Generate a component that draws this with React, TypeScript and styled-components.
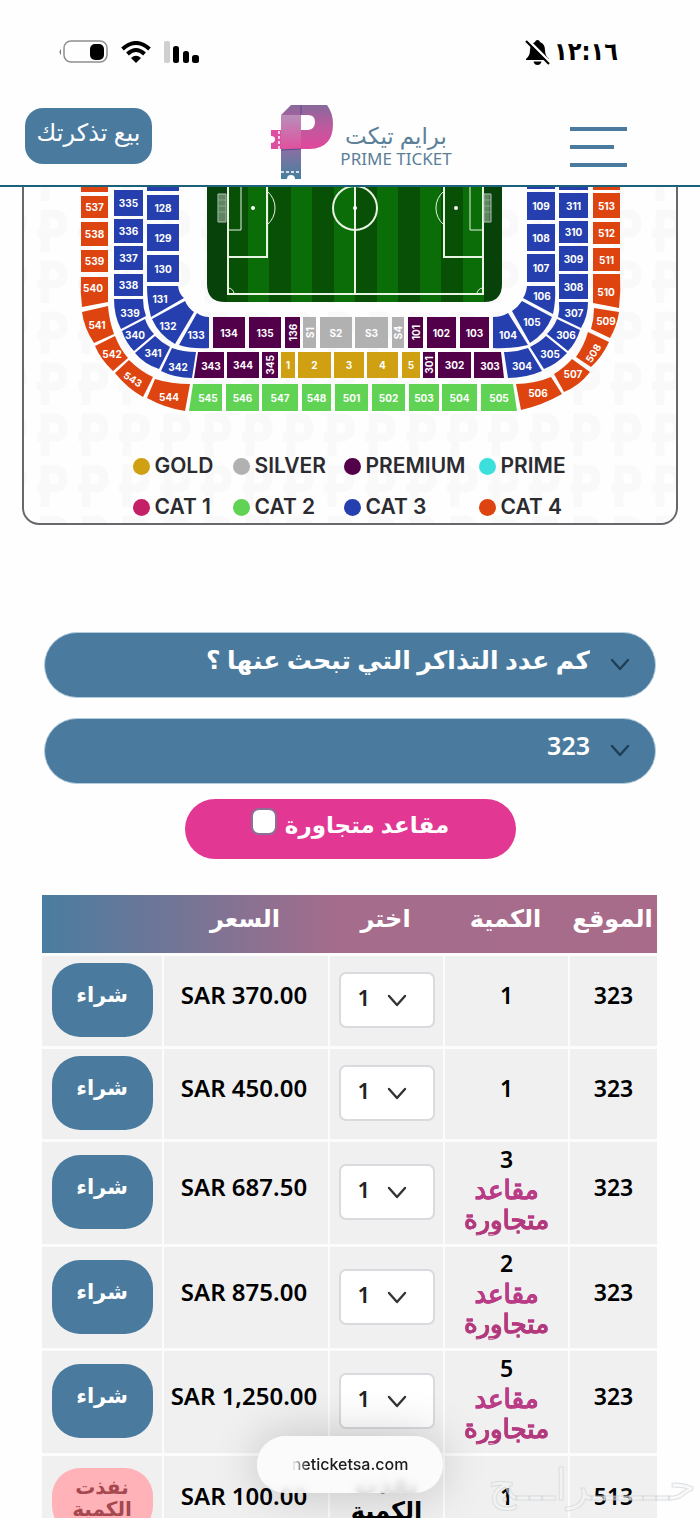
import React from "react";
import styled, { createGlobalStyle } from "styled-components";

const BLUE = "#4a7b9e";
const FONT = '"Noto Sans", "DejaVu Sans", sans-serif';

const GlobalStyle = createGlobalStyle`
  *, *::before, *::after { box-sizing: border-box; }
  body { margin: 0; background: #fefefe; font-family: ${FONT}; color: #000; }
  button, input, select { font: inherit; }
`;

const Screen = styled.div`
  position: relative;
  height: 100vh;
  overflow: hidden;
  display: flex;
  flex-direction: column;
`;

/* ---------- header ---------- */
const Header = styled.header`
  flex: none;
  border-bottom: 2px solid #1d6079;
  background: #fefefe;
`;
const StatusBar = styled.div`
  display: flex;
  align-items: center;
  justify-content: space-between;
  height: 104px;
  padding: 0 82px 0 58px;
`;
const Clock = styled.div`
  display: flex;
  align-items: center;
  gap: 4px;
  direction: ltr;
  font: 700 25px/32px "DejaVu Sans Condensed", "DejaVu Sans", sans-serif;
`;
const StatusIcons = styled.div`
  display: flex;
  align-items: center;
  gap: 13px;
  direction: ltr;
`;
const NavBar = styled.nav`
  display: flex;
  justify-content: space-between;
  height: 81px;
  padding: 0 73px 0 25px;
`;
const MenuButton = styled.button`
  align-self: flex-start;
  display: flex;
  flex-direction: column;
  align-items: flex-end;
  gap: 14px;
  width: 57px;
  margin-top: 23px;
  padding: 0;
  border: 0;
  background: none;
`;
const MenuLine = styled.span<{ $short?: boolean }>`
  width: ${(p) => (p.$short ? "44px" : "100%")};
  height: 4px;
  background: ${BLUE};
`;
const Logo = styled.a`
  display: flex;
  gap: 6px;
  color: #5b7f98;
  text-decoration: none;
`;
const LogoText = styled.span`
  display: flex;
  flex-direction: column;
  padding-top: 19px;
  text-align: center;
`;
const LogoArabic = styled.span`
  font-size: 23px;
  line-height: 25px;
`;
const LogoLatin = styled.span`
  font: 400 17px/22px "Noto Sans", sans-serif;
`;
const SellButton = styled.button`
  width: 127px;
  height: 56px;
  margin-top: 4px;
  padding: 0 0 10px;
  border: 0;
  border-radius: 18px;
  background: ${BLUE};
  color: #fff;
  font-size: 24px;
  white-space: nowrap;
`;

/* ---------- stadium card ---------- */
const Main = styled.main`
  flex: 1;
  min-height: 0;
  overflow: hidden;
`;
const MapCard = styled.section`
  position: relative;
  margin: 0 22px;
  border: 2px solid #66686c;
  border-top: 0;
  border-radius: 0 0 17px 17px;
  overflow: hidden;
  direction: ltr;
`;
const Pattern = styled.svg`
  position: absolute;
  inset: 0;
  width: 100%;
  height: 100%;
`;
const StadiumSvg = styled.svg`
  position: relative;
  display: block;
  width: 100%;
`;
const Legend = styled.ul`
  position: relative;
  display: grid;
  grid-template-columns: 100px 111px 135px 100px;
  justify-content: center;
  row-gap: 9px;
  margin: 0;
  padding: 29px 0 0 11px;
  list-style: none;
`;
const LegendItem = styled.li`
  display: flex;
  align-items: center;
  gap: 5px;
  height: 32px;
  color: #2b2b30;
  font: 600 21px/24px Inter, sans-serif;
  white-space: nowrap;
`;
const Dot = styled.span<{ $color: string }>`
  flex: none;
  width: 17px;
  height: 17px;
  border-radius: 50%;
  background: ${(p) => p.$color};
`;

/* ---------- filters ---------- */
const Filters = styled.form`
  display: flex;
  flex-direction: column;
  align-items: center;
  gap: 20px;
  margin-top: 107px;
  padding: 0 44px;
`;
const SelectBox = styled.div`
  position: relative;
  width: 100%;
`;
const FilterSelect = styled.select`
  display: block;
  width: 100%;
  height: 66px;
  padding: 0 65px 12px 20px;
  appearance: none;
  border: 1px solid #b4cddd;
  border-radius: 33px;
  background: ${BLUE};
  color: #fff;
  font-size: 25px;
  font-weight: 600;
`;
const FilterChevron = styled.svg`
  position: absolute;
  top: 26px;
  right: 26px;
  pointer-events: none;
`;
const AdjacentLabel = styled.label`
  display: flex;
  justify-content: center;
  gap: 8px;
  width: 331px;
  height: 60px;
  margin-top: -5px;
  padding-top: 9px;
  border-radius: 30px;
  background: #e23894;
  color: #fff;
  font-size: 23px;
  font-weight: 600;
  line-height: 32px;
`;
const CheckBox = styled.input`
  appearance: none;
  width: 26px;
  height: 27px;
  margin: 0;
  border: 2px solid #8b7096;
  border-radius: 8px;
  background: #fff;
`;

/* ---------- ticket table ---------- */
const TicketTable = styled.table`
  width: calc(100% - 85px);
  margin: 36px 43px 0 42px;
  border-collapse: separate;
  border-spacing: 0;
  table-layout: fixed;
  text-align: center;
`;
const HeadRow = styled.tr`
  background: linear-gradient(to right, #497d9f, #a56c8c 48%, #a86c8a);
`;
const HeadCell = styled.th<{ $width?: number }>`
  width: ${(p) => (p.$width ? `${p.$width}px` : "auto")};
  height: 58px;
  padding: 0 0 12px;
  color: #fff;
  font-size: 24px;
  font-weight: 600;
  line-height: 30px;
  white-space: nowrap;
`;
const Row = styled.tr<{ $height: number }>`
  height: ${(p) => p.$height}px;
`;
const Cell = styled.td<{ $control?: boolean; $tall?: boolean }>`
  padding: 0 0 ${(p) => (p.$tall ? 9 : p.$control ? 2 : 12)}px;
  border-top: 3px solid #fcfcfc;
  border-left: 2px solid #fcfcfc;
  background: #f0f0f0;
  font-size: 23px;
  font-weight: 600;
  line-height: 30px;
  white-space: nowrap;

  &:last-child { border-left: 0; }
`;
const Price = styled.span`
  font-size: 24px;
`;
const AdjacentNote = styled.div`
  background: linear-gradient(#c63c97, #a8386f);
  background-clip: text;
  color: transparent;
  font-size: 26px;
  font-weight: 400;
  -webkit-text-stroke: 1px #b93b86;
`;
const CountBox = styled.div`
  position: relative;
  width: 96px;
  margin: 0 auto;
`;
const CountSelect = styled.select`
  display: block;
  width: 100%;
  height: 56px;
  padding: 0 0 6px 17px;
  direction: ltr;
  appearance: none;
  border: 2px solid #d8dade;
  border-radius: 7px;
  background: #fff;
  color: #222;
  font-size: 22px;
  font-weight: 600;
`;
const CountChevron = styled.svg`
  position: absolute;
  top: 22px;
  right: 28px;
  pointer-events: none;
`;
const BuyButton = styled.button<{ $soldOut?: boolean }>`
  width: 101px;
  height: ${(p) => (p.$soldOut ? 66 : 74)}px;
  padding: ${(p) => (p.$soldOut ? "0 12px 6px" : "0 0 12px")};
  border: 0;
  border-radius: 28px;
  background: ${(p) => (p.$soldOut ? "#ffb3b8" : BLUE)};
  color: ${(p) => (p.$soldOut ? "#a5484f" : "#fff")};
  font-size: ${(p) => (p.$soldOut ? 20 : 21)}px;
  font-weight: 600;
  line-height: 22px;
  white-space: normal;
  vertical-align: middle;
`;
const SoldOut = styled.div`
  width: 80px;
  margin: 0 auto;
  padding-bottom: 8px;
  font-size: 24px;
  line-height: 26px;
  white-space: normal;
`;

/* ---------- overlays ---------- */
const AddressPill = styled.div`
  position: absolute;
  bottom: 25px;
  left: 50%;
  width: 186px;
  height: 57px;
  transform: translateX(-50%);
  border-radius: 29px;
  background: rgba(252, 252, 252, 0.88);
  backdrop-filter: blur(3px);
  box-shadow: 0 0 48px rgba(0, 0, 0, 0.2);
  direction: ltr;
  text-align: center;
  font: 500 16px/57px Inter, sans-serif;
  color: #1c1c1e;
`;
const Address = styled.span`
  mask-image: linear-gradient(to right, transparent, #000 16px);
`;
const Watermark = styled.div`
  position: absolute;
  right: 4px;
  bottom: 6px;
  color: rgba(244, 244, 244, 0.5);
  font: 400 44px/54px "DejaVu Sans", sans-serif;
  -webkit-text-stroke: 1px rgba(205, 210, 214, 0.6);
  pointer-events: none;
`;

/* ---------- stadium data ---------- */
const C = {
  red: "#dd4410",
  blue: "#263fae",
  green: "#60d354",
  purple: "#520049",
  gold: "#cfa011",
  silver: "#b2b1b2",
};
type Block = { n: string; c: string; d: string; x: number; y: number; r?: number };

const box = (n: string, c: string, x1: number, x2: number, y1: number, y2: number, r?: number): Block => ({
  n, c, r,
  d: `M${x1} ${y1}H${x2}V${y2}H${x1}Z`,
  x: (x1 + x2) / 2,
  y: (y1 + y2) / 2,
});
const shape = (n: string, c: string, x: number, y: number, d: string, r?: number): Block => ({ n, c, d, x, y, r });

const BLOCKS: Block[] = [
  box("", C.red, 81, 108, 180, 192),
  box("537", C.red, 81, 108, 196, 218),
  box("538", C.red, 81, 108, 222, 246),
  box("539", C.red, 81, 108, 250, 272),
  shape("540", C.red, 93, 288, "M81 277H108V302L82 307Q80 292 81 277Z"),
  shape("541", C.red, 97, 325, "M82 312L108 306Q109 320 114 334L94 343Q84 328 82 312Z"),
  shape("542", C.red, 112, 354, "M95 346L115 336Q120 349 128 358L113 371Q101 360 95 346Z"),
  shape("543", C.red, 133, 379, "M115 373L129 360Q140 371 153 377L143 397Q127 388 115 373Z", 32),
  shape("544", C.red, 169, 397, "M155 379Q171 384 190 384L185 411Q165 408 147 398Z"),
  shape("545", C.green, 208, 398, "M193 384H222V411H189Z"),
  box("546", C.green, 226, 259, 384, 411),
  box("547", C.green, 262, 298, 384, 411),
  box("548", C.green, 302, 331, 384, 411),
  box("501", C.green, 335, 368, 384, 411),
  box("502", C.green, 372, 405, 384, 411),
  box("503", C.green, 409, 439, 384, 411),
  box("504", C.green, 442, 477, 384, 411),
  shape("505", C.green, 499, 398, "M481 384H513L517 411H481Z"),
  shape("506", C.red, 538, 393, "M516 384Q534 384 551 377L562 394Q543 405 521 410Z"),
  shape("507", C.red, 573, 374, "M554 374Q564 368 572 359L590 372Q579 386 564 392Z"),
  shape("508", C.red, 593, 353, "M576 357Q584 346 588 332L609 342Q602 357 591 367Z", -58),
  shape("509", C.red, 606, 321, "M594 308L619 312Q617 326 610 338L591 329Q594 319 594 308Z"),
  shape("510", C.red, 606, 292, "M593 274H620Q621 291 619 308L593 303Z"),
  box("511", C.red, 593, 620, 248, 271),
  box("512", C.red, 593, 620, 222, 244),
  box("513", C.red, 593, 620, 193, 218),
  box("", C.red, 593, 620, 180, 190),

  box("335", C.blue, 114, 143, 190, 216),
  box("336", C.blue, 114, 143, 219, 243),
  box("337", C.blue, 114, 143, 246, 270),
  box("338", C.blue, 114, 143, 274, 296),
  shape("339", C.blue, 130, 313, "M114 299H143Q143 308 146 316L121 329Q114 316 114 299Z"),
  shape("340", C.blue, 135, 335, "M122 331L145 319Q148 328 154 334L134 351Q126 343 122 331Z"),
  shape("341", C.blue, 153, 353, "M135 353L155 336Q162 343 170 347L159 369Q144 364 135 353Z"),
  shape("342", C.blue, 178, 367, "M172 348Q183 352 196 352L192 378Q175 378 161 371Z"),
  shape("343", C.purple, 211, 366, "M198 352H224V378H194Z"),
  box("344", C.purple, 227, 259, 352, 378),
  box("345", C.purple, 262, 278, 352, 378, -90),
  box("1", C.gold, 281, 295, 352, 378),
  box("2", C.gold, 298, 331, 352, 378),
  box("3", C.gold, 334, 364, 352, 378),
  box("4", C.gold, 367, 398, 352, 378),
  box("5", C.gold, 402, 420, 352, 378),
  box("301", C.purple, 423, 435, 352, 378, -90),
  box("302", C.purple, 438, 471, 352, 378),
  shape("303", C.purple, 490, 366, "M474 352H501L504 378H474Z"),
  shape("304", C.blue, 522, 366, "M504 352Q517 352 528 348L542 371Q526 378 508 378Z"),
  shape("305", C.blue, 550, 354, "M530 347Q540 342 546 336L567 353Q557 364 544 369Z"),
  shape("306", C.blue, 566, 335, "M547 334Q554 327 557 319L580 330Q576 343 568 351Z"),
  shape("307", C.blue, 574, 313, "M559 302H588Q588 316 581 328L558 317Q560 310 559 302Z"),
  box("308", C.blue, 559, 588, 274, 299),
  box("309", C.blue, 559, 588, 246, 271),
  box("310", C.blue, 559, 588, 221, 243),
  box("311", C.blue, 559, 588, 193, 218),
  box("", C.blue, 559, 588, 180, 190),

  box("", C.blue, 147, 179, 180, 191),
  box("128", C.blue, 147, 179, 195, 220),
  box("129", C.blue, 147, 179, 224, 251),
  box("130", C.blue, 147, 179, 255, 282),
  shape("131", C.blue, 160, 299, "M147 286H178Q179 294 184 298L151 317Q147 302 147 286Z"),
  shape("132", C.blue, 168, 326, "M152 319L185 301Q188 308 194 312L175 344Q159 335 152 319Z"),
  shape("133", C.blue, 196, 335, "M197 313Q202 317 209 317V348Q191 349 179 345Z"),
  box("134", C.purple, 213, 245, 317, 348),
  box("135", C.purple, 249, 281, 317, 348),
  box("136", C.purple, 285, 300, 317, 348, -90),
  box("S1", C.silver, 303, 316, 317, 348, -90),
  box("S2", C.silver, 320, 352, 317, 348),
  box("S3", C.silver, 355, 388, 317, 348),
  box("S4", C.silver, 392, 404, 317, 348, -90),
  box("101", C.purple, 408, 423, 317, 348, -90),
  box("102", C.purple, 427, 456, 317, 348),
  box("103", C.purple, 460, 489, 317, 348),
  shape("104", C.blue, 508, 335, "M493 317Q502 317 508 313L528 345Q511 349 493 348Z"),
  shape("105", C.blue, 532, 322, "M512 311Q518 307 522 301L552 317Q545 334 530 343Z"),
  shape("106", C.blue, 542, 296, "M527 286H555Q556 300 553 314L523 298Q526 294 527 286Z"),
  box("107", C.blue, 527, 555, 254, 282),
  box("108", C.blue, 527, 555, 224, 251),
  box("109", C.blue, 527, 555, 192, 220),
  box("", C.blue, 527, 555, 180, 189),
];

const STRIPES = [248, 291, 334, 377, 420, 463];

const Stadium = () => (
  <StadiumSvg viewBox="24 187 652 234" role="img" aria-label="Stadium seating map">
    <path d="M207 180H502V284Q502 302 484 302H225Q207 302 207 284Z" fill="#06420a" />
    <rect x="227" y="180" width="256" height="122" fill="#075006" />
    {STRIPES.map((x) => (
      <rect key={x} x={x} y="180" width="21" height="122" fill="#0a6d08" />
    ))}
    <g fill="none" stroke="#e8f3e4" strokeWidth="2">
      <path d="M228 180V294H483V180M355 180V294M228 257H267V180M483 257H444V180" />
      <path d="M228 230H241V180M483 230H470V180" strokeWidth="1" />
      <circle cx="355" cy="208" r="22" />
      <path d="M267 191A22 22 0 0 1 267 225M444 191A22 22 0 0 0 444 225M228 288A6 6 0 0 1 234 294M483 288A6 6 0 0 0 477 294" strokeWidth="1" />
    </g>
    <g fill="#fff">
      <circle cx="253" cy="208" r="2" />
      <circle cx="355" cy="208" r="2" />
      <circle cx="456" cy="208" r="2" />
    </g>
    <g fill="#45704a" stroke="#b3c6b3" strokeWidth="1">
      <path d="M218 194H226V222H218ZM484 194H491V222H484Z" />
      <path d="M220 194V222M222 194V222M224 194V222M486 194V222M488 194V222M218 200H226M218 206H226M218 212H226M484 200H491M484 206H491M484 212H491" strokeWidth="0.5" />
    </g>
    {BLOCKS.map((b, i) => (
      <g key={i}>
        <path d={b.d} fill={b.c} />
        <text
          x={b.x}
          y={b.y}
          dy="4"
          fill="#fff"
          fontFamily="Inter, sans-serif"
          fontSize="10"
          fontWeight="700"
          textAnchor="middle"
          transform={b.r ? `rotate(${b.r} ${b.x} ${b.y})` : undefined}
        >
          {b.n}
        </text>
      </g>
    ))}
  </StadiumSvg>
);

const LEGEND: [string, string][] = [
  ["GOLD", C.gold],
  ["SILVER", C.silver],
  ["PREMIUM", C.purple],
  ["PRIME", "#3be0dc"],
  ["CAT 1", "#c42068"],
  ["CAT 2", C.green],
  ["CAT 3", C.blue],
  ["CAT 4", C.red],
];

type Ticket = { place: string; qty: number; adjacent?: boolean; price: string; soldOut?: boolean; height: number };
const TICKETS: Ticket[] = [
  { place: "323", qty: 1, price: "370.00", height: 93 },
  { place: "323", qty: 1, price: "450.00", height: 93 },
  { place: "323", qty: 3, adjacent: true, price: "687.50", height: 105 },
  { place: "323", qty: 2, adjacent: true, price: "875.00", height: 104 },
  { place: "323", qty: 5, adjacent: true, price: "1,250.00", height: 105 },
  { place: "513", qty: 1, price: "100.00", soldOut: true, height: 94 },
];

const LogoMark = () => (
  <svg width="64" height="76" viewBox="0 0 64 76" aria-hidden="true">
    <defs>
      <linearGradient id="bowl" x1="0" y1="0" x2="0" y2="1">
        <stop offset="0" stopColor="#876a9c" />
        <stop offset="0.5" stopColor="#bd5a9e" />
        <stop offset="1" stopColor="#e2479b" />
      </linearGradient>
      <linearGradient id="stem" x1="0" y1="0" x2="0" y2="1">
        <stop offset="0" stopColor="#8c6fa3" />
        <stop offset="1" stopColor="#45809f" />
      </linearGradient>
      <linearGradient id="fold" x1="0" y1="0" x2="0" y2="1">
        <stop offset="0" stopColor="#b88fb9" />
        <stop offset="1" stopColor="#e0509f" />
      </linearGradient>
    </defs>
    <path d="M11 11L21 1H57Q63 9 63 20Q63 44 40 45H31V26H38Q45 25 45 18Q45 11 38 11Z" fill="url(#bowl)" />
    <path d="M11 11H31V45H11Z" fill="url(#fold)" />
    <path d="M1 26H11V45H1V39Q5 39 5 35Q5 32 1 32Z" fill="#df4fa0" />
    <path d="M9 27V45" stroke="#fff" strokeWidth="1.5" strokeDasharray="3 2" />
    <path d="M11 45H31V75H25Q25 71 21 71Q17 71 17 75H11Z" fill="url(#stem)" />
    <path d="M11 68H31" stroke="#fff" strokeWidth="1.5" strokeDasharray="3 2" />
    <path d="M31 1V11M11 46L31 45" stroke="#5b4b93" strokeWidth="1" />
  </svg>
);

const Chevron = ({ as: As, color }: { as: typeof CountChevron; color: string }) => (
  <As width="20" height="14" viewBox="0 0 20 14" aria-hidden="true">
    <path d="M2 2L10 11L18 2" fill="none" stroke={color} strokeWidth="2.4" strokeLinecap="round" strokeLinejoin="round" />
  </As>
);

export default function App() {
  return (
    <Screen dir="rtl" lang="ar">
      <GlobalStyle />
      <Header>
        <StatusBar>
          <Clock>
            <svg width="25" height="27" viewBox="0 0 25 27" aria-hidden="true">
              <path d="M12.500 1Q14.500 1 15 3Q20 5 20 11Q20 17 24 20V21H1V20Q5 17 5 11Q5 5 10 3Q10.500 1 12.500 1Z" />
              <path d="M8.500 22.500H16.500Q15.500 26 12.500 26Q9.500 26 8.500 22.500Z" />
              <path d="M3 1L25 23" stroke="#fefefe" strokeWidth="2.500" />
              <path d="M1 2L24 25" stroke="#000" strokeWidth="2.200" />
            </svg>
            <span>١٢:١٦</span>
          </Clock>
          <StatusIcons>
            <svg width="50" height="24" viewBox="0 0 50 24" aria-hidden="true">
              <path d="M3 9Q0 12 3 15Z" fill="#777" />
              <rect x="6" y="1" width="43" height="21" rx="7" fill="none" stroke="#8f8f8f" strokeWidth="1.500" />
              <rect x="32" y="4" width="14" height="16" rx="5" />
            </svg>
            <svg width="30" height="22" viewBox="0 0 30 22" aria-hidden="true">
              <g fill="none" stroke="#000" strokeWidth="4">
                <path d="M1.500 8Q15 -4 28.500 8" />
                <path d="M6.500 13Q15 5 23.500 13" />
              </g>
              <path d="M10 17Q15 12.500 20 17L15 22Z" />
            </svg>
            <svg width="36" height="23" viewBox="0 0 36 23" aria-hidden="true">
              <rect x="0" y="0" width="6" height="22" rx="2" fill="#cfcfcf" />
              <rect x="9" y="5" width="6" height="17" rx="2.500" />
              <rect x="19" y="10" width="6" height="12" rx="2.500" />
              <rect x="28" y="14" width="7" height="8" rx="2.500" />
            </svg>
          </StatusIcons>
        </StatusBar>
        <NavBar>
          <MenuButton type="button" aria-label="القائمة">
            <MenuLine />
            <MenuLine $short />
            <MenuLine />
          </MenuButton>
          <Logo href="#">
            <LogoText>
              <LogoArabic>برايم تيكت</LogoArabic>
              <LogoLatin>PRIME TICKET</LogoLatin>
            </LogoText>
            <LogoMark />
          </Logo>
          <SellButton type="button">بيع تذكرتك</SellButton>
        </NavBar>
      </Header>

      <Main>
        <MapCard>
          <Pattern aria-hidden="true">
            <defs>
              <pattern id="marks" width="41" height="51" patternUnits="userSpaceOnUse" x="9" y="19">
                <path d="M12 46V8H22Q30 9 30 18Q30 27 21 27H4" fill="none" stroke="#faf9f9" strokeWidth="9" />
              </pattern>
            </defs>
            <rect width="100%" height="100%" fill="url(#marks)" />
          </Pattern>
          <Stadium />
          <Legend>
            {LEGEND.map(([name, color]) => (
              <LegendItem key={name}>
                <Dot $color={color} />
                {name}
              </LegendItem>
            ))}
          </Legend>
        </MapCard>

        <Filters>
          <SelectBox>
            <FilterSelect aria-label="عدد التذاكر">
              <option>كم عدد التذاكر التي تبحث عنها ؟</option>
            </FilterSelect>
            <Chevron as={FilterChevron} color="#1f3f56" />
          </SelectBox>
          <SelectBox>
            <FilterSelect aria-label="الموقع">
              <option>323</option>
            </FilterSelect>
            <Chevron as={FilterChevron} color="#1f3f56" />
          </SelectBox>
          <AdjacentLabel>
            مقاعد متجاورة
            <CheckBox type="checkbox" />
          </AdjacentLabel>
        </Filters>

        <TicketTable>
          <thead>
            <HeadRow>
              <HeadCell $width={89}>الموقع</HeadCell>
              <HeadCell $width={125}>الكمية</HeadCell>
              <HeadCell $width={115}>اختر</HeadCell>
              <HeadCell $width={166}>السعر</HeadCell>
              <HeadCell aria-label="شراء" />
            </HeadRow>
          </thead>
          <tbody>
            {TICKETS.map((t, i) => (
              <Row key={i} $height={t.height}>
                <Cell>{t.place}</Cell>
                <Cell $tall={t.adjacent}>
                  {t.qty}
                  {t.adjacent && (
                    <AdjacentNote>
                      مقاعد
                      <br />
                      متجاورة
                    </AdjacentNote>
                  )}
                </Cell>
                <Cell $control>
                  {t.soldOut ? (
                    <SoldOut>نفذت الكمية</SoldOut>
                  ) : (
                    <CountBox>
                      <CountSelect aria-label="اختر">
                        <option>1</option>
                      </CountSelect>
                      <Chevron as={CountChevron} color="#333" />
                    </CountBox>
                  )}
                </Cell>
                <Cell dir="ltr">
                  <Price>SAR {t.price}</Price>
                </Cell>
                <Cell $control>
                  <BuyButton type="button" $soldOut={t.soldOut} disabled={t.soldOut}>
                    {t.soldOut ? "نفذت الكمية" : "شراء"}
                  </BuyButton>
                </Cell>
              </Row>
            ))}
          </tbody>
        </TicketTable>
      </Main>

      <Watermark aria-hidden="true">حــــــراـــج</Watermark>
      <AddressPill>
        <Address>neticketsa.com</Address>
      </AddressPill>
    </Screen>
  );
}
